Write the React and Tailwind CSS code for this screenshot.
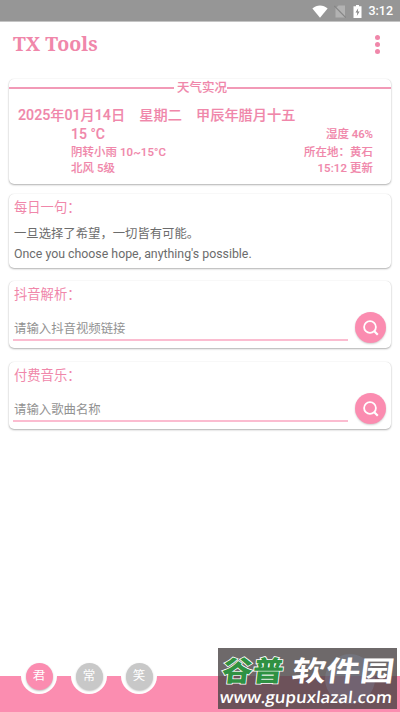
import React, { useState } from 'react';

const TABS = [
    { id: 'jun', label: '君' },
    { id: 'chang', label: '常' },
    { id: 'xiao', label: '笑' },
];

function StatusBar() {
    return (
        <div className="h-[22px] shrink-0 bg-[#969696] border-b border-[#c4c4c4] flex items-center justify-end pt-[2px] pr-[7px] text-white">
            <svg className="w-4 h-[13px]" viewBox="0 0 16 13" fill="currentColor">
                <path d="M0.4 3.4C2.6 1.5 5.2 .5 8 .5s5.400 1 7.600 2.900L8 12.800z" />
            </svg>
            <svg className="w-3 h-[13px] ml-[6px]" viewBox="0 0 12 13">
                <path d="M4.500 .5H11v12H1.500v-9z" fill="#b2b2b2" />
                <path d="M.3 1l11.400 11.500" stroke="#868686" strokeWidth="1.100" />
            </svg>
            <svg className="w-[9px] h-[13px] ml-[7px]" viewBox="0 0 9 13">
                <path d="M3 0h3v1.300h2.500V13H.5V1.300H3z" fill="currentColor" />
                <path d="M5.200 3.200L2.500 7.500h1.800L3.800 11l2.800-4.500H4.800z" fill="#888" />
            </svg>
            <span className="ml-[6px] text-[12.5px] font-medium leading-none">3:12</span>
        </div>
    );
}

function Card({ className = '', children }) {
    return (
        <section className={`mx-[9px] shrink-0 rounded-[5px] bg-white shadow-[0_1px_2px_rgba(0,0,0,0.3),0_0_1px_rgba(0,0,0,0.15)] ${className}`}>
            {children}
        </section>
    );
}

function SearchCard({ title, placeholder, className }) {
    return (
        <Card className={`pl-[4px] pr-[5px] flex flex-col ${className}`}>
            <h2 className="pt-[5px] pl-px text-[13.3px] leading-[18px]">{title}</h2>
            <div className="flex">
                <div className="w-[335px] h-[37px] border-b-2 border-[#fbbcd0]">
                    <input
                        placeholder={placeholder}
                        className="block w-full h-[18px] mt-[16px] p-0 pl-px text-[12.4px] leading-[18px] outline-none placeholder:text-[#929292]"
                    />
                </div>
                <button className="ml-auto mt-[8px] size-[31px] rounded-full bg-[#fb8cb0] flex items-center justify-center shadow-[0_1px_2px_rgba(0,0,0,0.2)]">
                    <svg className="size-4" viewBox="0 0 16 16" fill="none" stroke="white" strokeWidth="1.800">
                        <circle cx="7" cy="7" r="5.900" />
                        <path d="M10.800 10.800l4 4" strokeWidth="2.200" />
                    </svg>
                </button>
            </div>
        </Card>
    );
}

function Watermark() {
    return (
        <div className="absolute left-[218px] top-[648px] w-[179px] h-[61px] overflow-hidden bg-[#4a4345]/80 text-white">
            <div className="absolute left-[107px] top-[6px] size-[50px] rounded-full bg-[#8499b8]/25" />
            <div className="absolute left-[4px] top-[8px] flex gap-[4px] text-[28px] leading-[31px] font-black">
                <span className="w-[66px]">
                    <span className="block w-max origin-left scale-x-[1.1] -skew-x-6 text-[#2f9142] [-webkit-text-stroke:1.600px_white] [paint-order:stroke_fill]">谷普</span>
                </span>
                <span className="block w-max origin-left scale-x-[1.22] -skew-x-6 font-bold">软件园</span>
            </div>
            <p className="absolute left-[2px] top-[39px] w-max origin-left scale-x-[1.05] -skew-x-6 font-['Open_Sans',sans-serif] text-[16px] leading-[20px] font-semibold">www.gupuxlazal.com</p>
        </div>
    );
}

export default function App() {
    const [tab, setTab] = useState('jun');

    return (
        <main className="relative w-[400px] h-[712px] overflow-hidden flex flex-col bg-white text-[#f087aa] font-[Roboto,'Noto_Sans_CJK_SC',sans-serif]">
            <StatusBar />
            <header className="h-[44px] shrink-0 flex items-center justify-between pl-[13px] pr-[20px]">
                <h1 className="font-['Noto_Serif','DejaVu_Serif_Condensed','DejaVu_Serif',serif] text-[19.6px] font-bold leading-none">TX Tools</h1>
                <button className="flex flex-col gap-[2px]">
                    <span className="size-[5px] rounded-full bg-[#f087aa]" />
                    <span className="size-[5px] rounded-full bg-[#f087aa]" />
                    <span className="size-[5px] rounded-full bg-[#f087aa]" />
                </button>
            </header>

            <Card className="mt-[13px] h-[105px] font-medium [-webkit-text-stroke:0.120px_#f087aa]">
                <div className="h-[17px] flex items-center text-[12.5px] leading-[17px]">
                    <span className="h-[2px] w-[165px] bg-[#f29ab7]" />
                    <h2 className="flex-1 pl-[3px] whitespace-nowrap">天气实况</h2>
                    <span className="h-[2px] w-[164px] bg-[#f29ab7]" />
                </div>
                <p className="pl-[9px] mt-[9px] text-[14.2px] leading-[20px] whitespace-pre">2025年01月14日　星期二　甲辰年腊月十五</p>
                <div className="pl-[62px] pr-[18px] flex justify-between text-[11.4px] leading-[16px]">
                    <div>
                        <p className="text-[14px] leading-[19px]">15 °C</p>
                        <p className="tracking-[0.120px]">阴转小雨 10~15°C</p>
                        <p className="tracking-[0.120px]">北风 5级</p>
                    </div>
                    <div className="text-right">
                        <p className="leading-[19px]">湿度 46%</p>
                        <p className="tracking-[0.120px]">所在地：黄石</p>
                        <p className="tracking-[0.120px]">15:12 更新</p>
                    </div>
                </div>
            </Card>

            <Card className="mt-[10px] h-[74px] pl-[5px]">
                <h2 className="pt-[5px] text-[13.3px] leading-[18px]">每日一句：</h2>
                <div className="mt-[7px] text-[12.35px] leading-[20px] text-[#6c6c6c]">
                    <p>一旦选择了希望，一切皆有可能。</p>
                    <p>Once you choose hope, anything's possible.</p>
                </div>
            </Card>

            <SearchCard title="抖音解析：" placeholder="请输入抖音视频链接" className="mt-[13px] h-[67px]" />
            <SearchCard title="付费音乐：" placeholder="请输入歌曲名称" className="mt-[14px] h-[67px]" />

            <nav className="mt-auto h-[36px] shrink-0 bg-[#fb8db0] flex gap-[14px] pl-[21px]">
                {TABS.map((item) => (
                    <button
                        key={item.id}
                        onClick={() => setTab(item.id)}
                        className="-mt-[18px] size-[36px] rounded-full bg-white flex items-center justify-center"
                    >
                        <span className={`size-[27px] rounded-full flex items-center justify-center text-[12.5px] text-white shadow-[0_1px_2px_rgba(0,0,0,0.25)] ${tab === item.id ? 'bg-[#fb8cb0]' : 'bg-[#c8c8c8]'}`}>
                            {item.label}
                        </span>
                    </button>
                ))}
            </nav>
            <Watermark />
        </main>
    );
}
